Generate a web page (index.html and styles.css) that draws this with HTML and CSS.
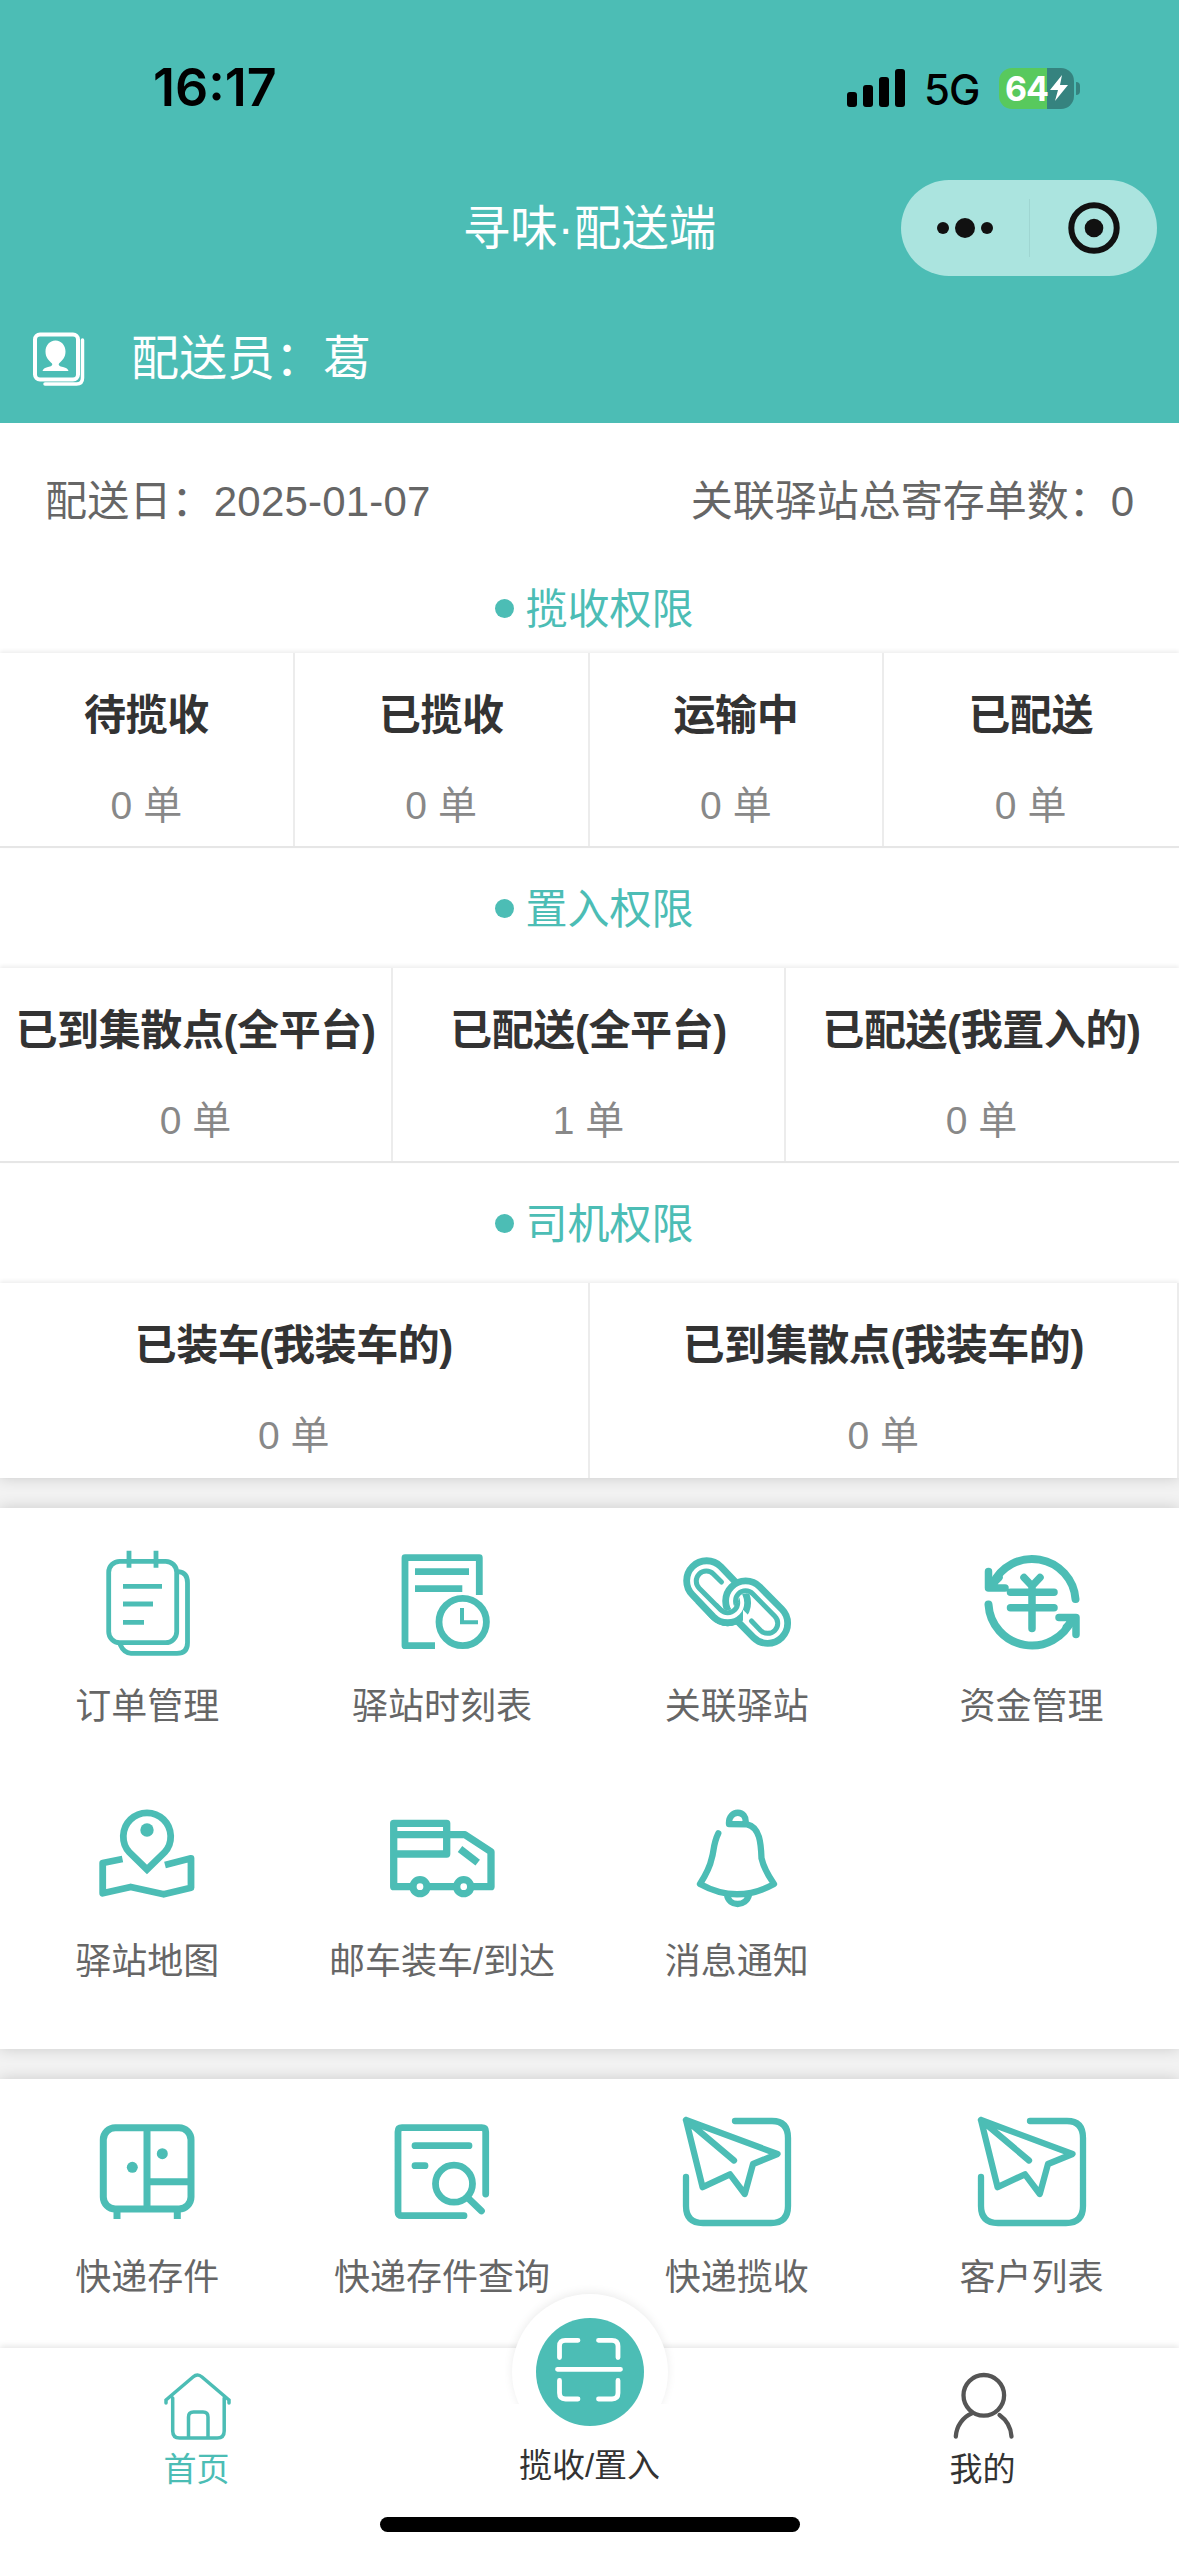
FILE: index.html
```html
<!DOCTYPE html>
<html lang="zh-CN">
<head>
<meta charset="utf-8">
<title>寻味·配送端</title>
<link rel="stylesheet" href="styles.css">
</head>
<body>
<div class="app">
  <header class="header">
    <div class="status-bar">
      <span class="clock">16:17</span>
      <div class="status-icons">
        <svg class="signal" viewBox="0 0 58 38"><rect x="0" y="23" width="10" height="15" rx="3"/><rect x="16" y="16" width="10" height="22" rx="3"/><rect x="32" y="8" width="10" height="30" rx="3"/><rect x="48" y="0" width="10" height="38" rx="3"/></svg>
        <span class="network">5G</span>
        <div class="battery">
          <span class="battery-level">64</span>
          <svg class="bolt" viewBox="0 0 18 26"><path d="M12 0L0 15h8L5 26 18 10h-8z"/></svg>
        </div>
        <span class="battery-cap"></span>
      </div>
    </div>
    <div class="nav-bar">
      <h1 class="nav-title">寻味·配送端</h1>
      <div class="capsule">
        <div class="capsule-half"><svg class="dots" viewBox="0 0 56 20"><circle cx="6" cy="10" r="6"/><circle cx="28" cy="10" r="10"/><circle cx="50" cy="10" r="6"/></svg></div>
        <div class="capsule-half capsule-close"><svg class="target" viewBox="0 0 52 52"><circle cx="26" cy="26" r="22.700" fill="none" stroke="#111" stroke-width="6"/><circle cx="26" cy="26" r="9.300"/></svg></div>
      </div>
    </div>
    <div class="courier">
      <svg class="courier-icon" viewBox="0 0 52 56"><rect x="2" y="2.500" width="43" height="45" rx="5" fill="none" stroke="#fff" stroke-width="4"/><path d="M49.500 8v38q0 6-6 6H12" fill="none" stroke="#fff" stroke-width="3.500" stroke-linecap="round"/><path d="M22.500 8.500c-6 0-10 5-10 11 0 6 3 8.500 6.500 12 1 2-1 3-4 3.500-3.500.8-5 2-5.500 4h26c-.5-2-2-3.200-5.500-4-3-.5-5-1.500-4-3.500 3.500-3.500 6.500-6 6.500-12 0-6-4-11-10-11z" fill="#fff"/></svg>
      <span class="courier-name">配送员：葛</span>
    </div>
  </header>

  <main class="content">
    <section class="card card-top">
      <div class="summary"><span class="delivery-date">配送日：2025-01-07</span><span>关联驿站总寄存单数：0</span></div>
      <h2 class="section-title section-title-first"><i class="bullet"></i><span>揽收权限</span></h2>
      <div class="stats">
        <div class="stat"><b>待揽收</b><span>0 单</span></div>
        <div class="stat"><b>已揽收</b><span>0 单</span></div>
        <div class="stat"><b>运输中</b><span>0 单</span></div>
        <div class="stat"><b>已配送</b><span>0 单</span></div>
      </div>
      <h2 class="section-title"><i class="bullet"></i><span>置入权限</span></h2>
      <div class="stats">
        <div class="stat"><b>已到集散点(全平台)</b><span>0 单</span></div>
        <div class="stat"><b>已配送(全平台)</b><span>1 单</span></div>
        <div class="stat"><b>已配送(我置入的)</b><span>0 单</span></div>
      </div>
      <h2 class="section-title"><i class="bullet"></i><span>司机权限</span></h2>
      <div class="stats stats-last">
        <div class="stat"><b>已装车(我装车的)</b><span>0 单</span></div>
        <div class="stat"><b>已到集散点(我装车的)</b><span>0 单</span></div>
      </div>
    </section>

    <section class="card menu menu-main">
      <a class="menu-item">
        <svg class="menu-icon" viewBox="0 0 120 120" stroke-width="4.800"><rect x="21.700" y="20.300" width="68" height="81.400" rx="11"/><path d="M42 9.700v17M69 9.700v17M91.500 30.700q9 1 9 11v60q0 10.600-10.500 10.600H44q-7 0-11-9M36 45.300h39M36 63h30M36 81.300h21"/></svg>
        <span>订单管理</span>
      </a>
      <a class="menu-item">
        <svg class="menu-icon" viewBox="0 0 120 120" stroke-width="6.800"><path stroke-linejoin="round" d="M97.300 54V16.700H23v88h30"/><path d="M33 30.700h54M33 47.700h47.300"/><circle cx="80.700" cy="81" r="23.700"/><path stroke-width="4" d="M80 67v14.300h16"/></svg>
        <span>驿站时刻表</span>
      </a>
      <a class="menu-item">
        <svg class="menu-icon" viewBox="0 0 120 120">
          <defs>
            <clipPath id="lower-half"><path d="M0 62H66V120H0z"/></clipPath>
            <g id="link-upper"><path stroke="#fff" stroke-width="14" d="M40.300 29a15 15 0 0 0-21.200 21.200L40.100 72.300a15 15 0 0 0 21.200-21.200z"/><path stroke-width="6.800" d="M43.800 25.600a20 20 0 0 0-28.300 28.300L36.500 75.900a20 20 0 0 0 28.300-28.300z"/><path stroke-width="5" stroke-linecap="round" d="M44.500 41L36.400 33a10 10 0 0 0-14.200 14.200L43.600 68.700a10 10 0 0 0 14.200-14.200"/></g>
            <g id="link-lower"><path stroke="#fff" stroke-width="14" d="M58 70.600a15 15 0 0 1 21.200-21.200L101.300 71.700a15 15 0 0 1-21.200 21.200z"/><path stroke-width="6.800" d="M54.500 74.100a20 20 0 0 1 28.300-28.300L104.800 68.200a20 20 0 0 1-28.300 28.300z"/><path stroke-width="5" stroke-linecap="round" d="M61.500 67a10 10 0 0 1 14.200-14.200L97.800 75.200a10 10 0 0 1-14.200 14.200L74.500 80"/></g>
          </defs>
          <use href="#link-upper"/><use href="#link-lower"/><use href="#link-upper" clip-path="url(#lower-half)"/>
        </svg>
        <span>关联驿站</span>
      </a>
      <a class="menu-item">
        <svg class="menu-icon round" viewBox="0 0 120 120" stroke-width="8"><path d="M20.500 43.500A43.500 43.500 0 0 1 103.500 58M16.500 63.500A43.500 43.500 0 0 0 100 78"/><path stroke-width="7.500" d="M16.500 30.500v16.500h16.500M87 76.500h17v17M17 46.500l10-10M103.500 77l-9 9M52 36.500l8 8.500 8-8.500M60 46v41.500M38.500 51.300h43.500M38.500 66.700h43.500"/></svg>
        <span>资金管理</span>
      </a>
      <a class="menu-item">
        <svg class="menu-icon" viewBox="0 0 120 120" stroke-width="6.800"><path d="M60 73.500L42.500 56.500A23.700 23.700 0 1 1 77.500 56.500z"/><circle class="solid" cx="60" cy="34" r="6.700"/><path stroke-linejoin="round" d="M35.500 63L15.700 67v30.300l28-6.300 33 7.300 27.300-6.600V62.300L78 69"/></svg>
        <span>驿站地图</span>
      </a>
      <a class="menu-item">
        <svg class="menu-icon" viewBox="0 0 120 120" stroke-width="7.300"><path stroke-linejoin="round" d="M11.700 27.300h53V58h-53zM11.700 38.700h71.300l26 17v35H11.700z"/><circle class="paper" cx="38" cy="90.700" r="7"/><circle class="paper" cx="81.700" cy="90.700" r="7"/><path d="M78 53l17.700 13.700"/></svg>
        <span>邮车装车/到达</span>
      </a>
      <a class="menu-item">
        <svg class="menu-icon round" viewBox="0 0 120 120" stroke-width="6.300"><path d="M41.300 37.300C36 48 37 56 34.700 62.300 33 71 28 80 23 88q37 20.500 74 0C90 78 86 69 84.500 62.300 84 48 83 31 70 28.300L52 28C51 13 71 13 68.500 28M50 99c2 12 19 12 22 0"/></svg>
        <span>消息通知</span>
      </a>
    </section>

    <section class="card menu">
      <a class="menu-item">
        <svg class="menu-icon" viewBox="0 0 120 120" stroke-width="7"><rect x="16.300" y="15.700" width="87.700" height="81.300" rx="12"/><path d="M60 16v81M60 69.700h44M30 97v10M90.300 97v10"/><circle class="solid" cx="45.300" cy="55.300" r="5.500"/><circle class="solid" cx="75.300" cy="41.700" r="5.500"/></svg>
        <span>快递存件</span>
      </a>
      <a class="menu-item">
        <svg class="menu-icon round" viewBox="0 0 120 120" stroke-width="6.800"><path d="M82 103.700H20q-4 0-4-4v-80q0-4 4-4h79.700q4 0 4 4V82M33 33.700h54M33 53.700h10M86 86l13.500 13"/><circle cx="72" cy="71.700" r="18.500"/></svg>
        <span>快递存件查询</span>
      </a>
      <a class="menu-item">
        <svg class="menu-icon round" viewBox="0 0 120 120" stroke-width="6.300"><path d="M58 9h37q16 0 16 17v68q0 17-17 17H26q-17 0-17-17V65M9 8l91.500 34-24.500 10-8.200 30L53 62.300 25.600 75.200zL57 48.500"/></svg>
        <span>快递揽收</span>
      </a>
      <a class="menu-item">
        <svg class="menu-icon round" viewBox="0 0 120 120" stroke-width="6.300"><path d="M58 9h37q16 0 16 17v68q0 17-17 17H26q-17 0-17-17V65M9 8l91.500 34-24.500 10-8.200 30L53 62.300 25.600 75.200zL57 48.500"/></svg>
        <span>客户列表</span>
      </a>
    </section>
  </main>

  <nav class="tab-bar">
    <div class="tabs">
      <a class="tab tab-active">
        <svg class="tab-icon" viewBox="0 0 80 80" stroke-width="3.500"><path d="M9 38v-3L36 12q4.500-4 9 0L72 35v3M15.700 33v33q0 7 7 7h37.500q7 0 7-7V33M31.500 72V52q0-5 5-5h9.500q5 0 5 5v20"/></svg>
        <span>首页</span>
      </a>
      <a class="tab tab-scan">
        <span class="scan-halo"></span>
        <svg class="scan-icon" viewBox="0 0 108 108"><circle cx="54" cy="54" r="54" fill="#4cbdb5"/><path d="M23.500 39.500V28q0-5.700 5.700-5.700H42M62.500 22.300h13.500q6 0 6 6v11.200M82 62.500V75q0 6-6 6H62.500M42 81H29.500q-6 0-6-6V62.500M21.500 51.300h63" fill="none" stroke="#fff" stroke-width="4.800" stroke-linecap="round"/></svg>
        <span>揽收/置入</span>
      </a>
      <a class="tab">
        <svg class="tab-icon" viewBox="0 0 80 80" stroke-width="4.300"><circle cx="40.800" cy="30.300" r="20.300"/><path d="M12.800 71.500C13.500 61 20 52 29 48.300M56.500 50C63.500 55 68 63 68.500 71.500"/></svg>
        <span>我的</span>
      </a>
    </div>
    <span class="home-indicator"></span>
  </nav>
</div>
</body>
</html>
```
FILE: styles.css
```css
* { box-sizing: border-box; }

body {
  margin: 0;
  font-family: "Liberation Sans", "Noto Sans CJK SC", sans-serif;
  color: #333;
  background: #f2f2f2;
}

.app {
  display: flex;
  flex-direction: column;
  width: 1179px;
  height: 2556px;
  overflow: hidden;
}

/* Header */
.header {
  position: relative;
  z-index: 1;
  flex: none;
  height: 423px;
  background: #4cbdb5;
  color: #fff;
}

.status-bar {
  display: flex;
  justify-content: space-between;
  align-items: center;
  height: 176px;
  padding: 0 99px 0 153px;
  color: #000;
  font-family: Inter, sans-serif;
}

.clock { font-size: 52px; font-weight: 600; line-height: 60px; }

.status-icons { display: flex; align-items: center; }
.signal { width: 58px; height: 38px; }
.network { margin: 3px 0 0 19px; width: 75px; font-size: 42px; font-weight: 500; line-height: 50px; letter-spacing: -1px; }

.battery {
  display: flex;
  align-items: center;
  width: 75px;
  height: 41px;
  padding-left: 6px;
  border-radius: 13px;
  background: linear-gradient(90deg, #58c95d 48px, #35837f 48px);
  color: #fff;
}
.battery-level { font-size: 34px; font-weight: 700; line-height: 41px; letter-spacing: -1px; }
.bolt { width: 18px; height: 26px; margin-left: 2px; fill: #fff; }
.battery-cap { width: 4px; height: 13px; margin-left: 2px; border-radius: 0 4px 4px 0; background: #35837f; }

.nav-bar {
  display: grid;
  grid-template-columns: 1fr auto 1fr;
  align-items: center;
  height: 104px;
  padding-right: 22px;
}
.nav-title { grid-column: 2; margin: 2px -22px 0 0; font-size: 47.500px; font-weight: 400; line-height: 60px; }

.capsule {
  justify-self: end;
  display: flex;
  align-items: center;
  width: 256px;
  height: 96px;
  border-radius: 48px;
  background: #abe4df;
}
.capsule-half { display: flex; flex: 1; align-items: center; justify-content: center; height: 58px; }
.capsule-close { border-left: 1px solid #9fd6d2; }
.dots { width: 56px; height: 20px; margin-left: 1px; fill: #111; }
.target { width: 52px; height: 52px; margin-left: 2px; fill: #111; }

.courier { display: flex; align-items: center; gap: 46px; padding: 46px 33px 0; }
.courier-icon { width: 52px; height: 56px; margin-top: 1px; }
.courier-name { font-size: 48px; line-height: 66px; }

/* Cards */
.content {
  display: flex;
  flex: 1;
  flex-direction: column;
  gap: 30px;
  min-height: 0;
}
.card { flex: none; background: #fff; box-shadow: 0 0 14px rgba(0, 0, 0, .16); }

.summary {
  display: flex;
  justify-content: space-between;
  height: 140px;
  padding: 0 45px;
  color: #666;
  font-size: 42px;
  line-height: 158px;
}
.delivery-date { letter-spacing: .2px; }

.section-title {
  display: flex;
  align-items: center;
  justify-content: center;
  gap: 11px;
  height: 120px;
  margin: 0;
  padding-left: 10px;
  color: #4cbdb5;
  font-size: 42px;
  font-weight: 400;
  line-height: 60px;
}
.section-title span { margin-top: 3px; }
.section-title-first { height: 90px; }
.bullet { width: 19px; height: 19px; border-radius: 50%; background: #4cbdb5; }

.stats {
  display: flex;
  height: 195px;
  border-bottom: 2px solid #e6e6e6;
  box-shadow: 0 -2px 4px rgba(0, 0, 0, .07);
}
.stats-last { border-bottom: 0; }
.stat {
  display: flex;
  flex: 1;
  flex-direction: column;
  align-items: center;
  gap: 30px;
  padding-top: 33px;
  border-right: 2px solid #ececec;
  white-space: nowrap;
}
.stats:not(.stats-last) .stat:last-child { border-right-color: transparent; }
.stat b { font-size: 42px; font-weight: 600; line-height: 60px; letter-spacing: -.4px; }
.stat span { color: #888; font-size: 39px; line-height: 60px; }

/* Menu grid */
.menu { display: grid; grid-template-columns: repeat(4, 1fr); grid-auto-rows: 255px; padding-top: 33px; }
.menu-main { height: 541px; }
.menu-item { display: flex; flex-direction: column; align-items: center; gap: 18px; color: #666; }
.menu-item span { font-size: 36px; line-height: 56px; }
.menu-icon { width: 120px; height: 120px; fill: none; stroke: #4cbdb5; }
.round { stroke-linecap: round; stroke-linejoin: round; }
.solid { fill: #4cbdb5; stroke: none; }
.paper { fill: #fff; }

/* Tab bar */
.tab-bar {
  position: relative;
  display: flex;
  flex: none;
  flex-direction: column;
  align-items: center;
  height: 208px;
  background: #fff;
  box-shadow: 0 -2px 6px rgba(0, 0, 0, .1);
}
.tabs { display: flex; width: 100%; height: 169px; }
.tab { display: flex; flex: 1; flex-direction: column; align-items: center; gap: 2px; padding-top: 17px; font-size: 33px; line-height: 46px; }
.tab-icon { width: 80px; height: 80px; fill: none; stroke: #555; stroke-linecap: round; }
.tab-active { color: #4cbdb5; }
.tab-active .tab-icon { stroke: #4cbdb5; }
.tab-scan { position: relative; gap: 17px; padding-top: 0; }
.scan-halo {
  position: absolute;
  top: -54px;
  left: 119px;
  width: 156px;
  height: 156px;
  border-radius: 50%;
  background: #fff;
  box-shadow: 0 -2px 10px rgba(0, 0, 0, .08);
  clip-path: inset(-20px -20px 46px -20px);
}
.scan-icon { position: relative; flex: none; width: 108px; height: 108px; margin-top: -30px; }
.home-indicator { width: 420px; height: 15px; border-radius: 8px; background: #000; }
```
